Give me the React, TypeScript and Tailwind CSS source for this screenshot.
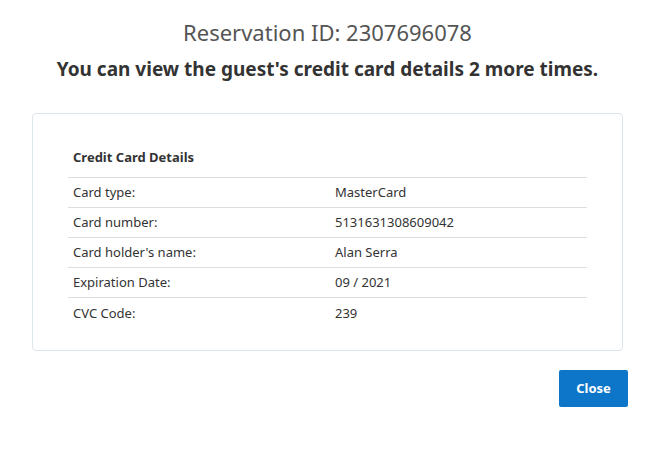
export default function App() {
  const rows: [string, string][] = [
    ["Card type:", "MasterCard"],
    ["Card number:", "5131631308609042"],
    ["Card holder's name:", "Alan Serra"],
    ["Expiration Date:", "09 / 2021"],
    ["CVC Code:", "239"],
  ];

  return (
    <div
      className="w-[655px] h-[449px] bg-white text-[#333] flex flex-col"
      style={{ fontFamily: '"Noto Sans", "Open Sans", sans-serif' }}
    >
      <h2 className="mt-[17px] text-center text-[22px] leading-[30px] text-[#555]">
        Reservation ID: 2307696078
      </h2>
      <h3 className="mt-[8px] text-center text-[19px] leading-[28px] font-bold text-[#333]">
        You can view the guest's credit card details 2 more times.
      </h3>

      {/* card details panel */}
      <div className="mx-[32px] mt-[30px] h-[238px] border border-[#dbe5ea] rounded-[4px] px-[35px] pt-[34px]">
        <table className="w-full text-[13px] border-collapse">
          <thead>
            <tr>
              <th
                colSpan={2}
                className="text-left font-bold px-[5px] h-[29px] align-top"
              >
                Credit Card Details
              </th>
            </tr>
          </thead>
          <tbody>
            {rows.map(([label, value]) => (
              <tr key={label} className="border-t border-[#dddddd]">
                <td className="w-[262px] px-[5px] pt-[2px] h-[30px] align-middle">{label}</td>
                <td className="px-[5px] pt-[2px] h-[30px] align-middle">{value}</td>
              </tr>
            ))}
          </tbody>
        </table>
      </div>

      <div className="flex justify-end mr-[27px] mt-[19px]">
        <button className="w-[69px] h-[37px] rounded-[2px] bg-[#0e76c9] text-white text-[13px] font-bold">
          Close
        </button>
      </div>
    </div>
  );
}
